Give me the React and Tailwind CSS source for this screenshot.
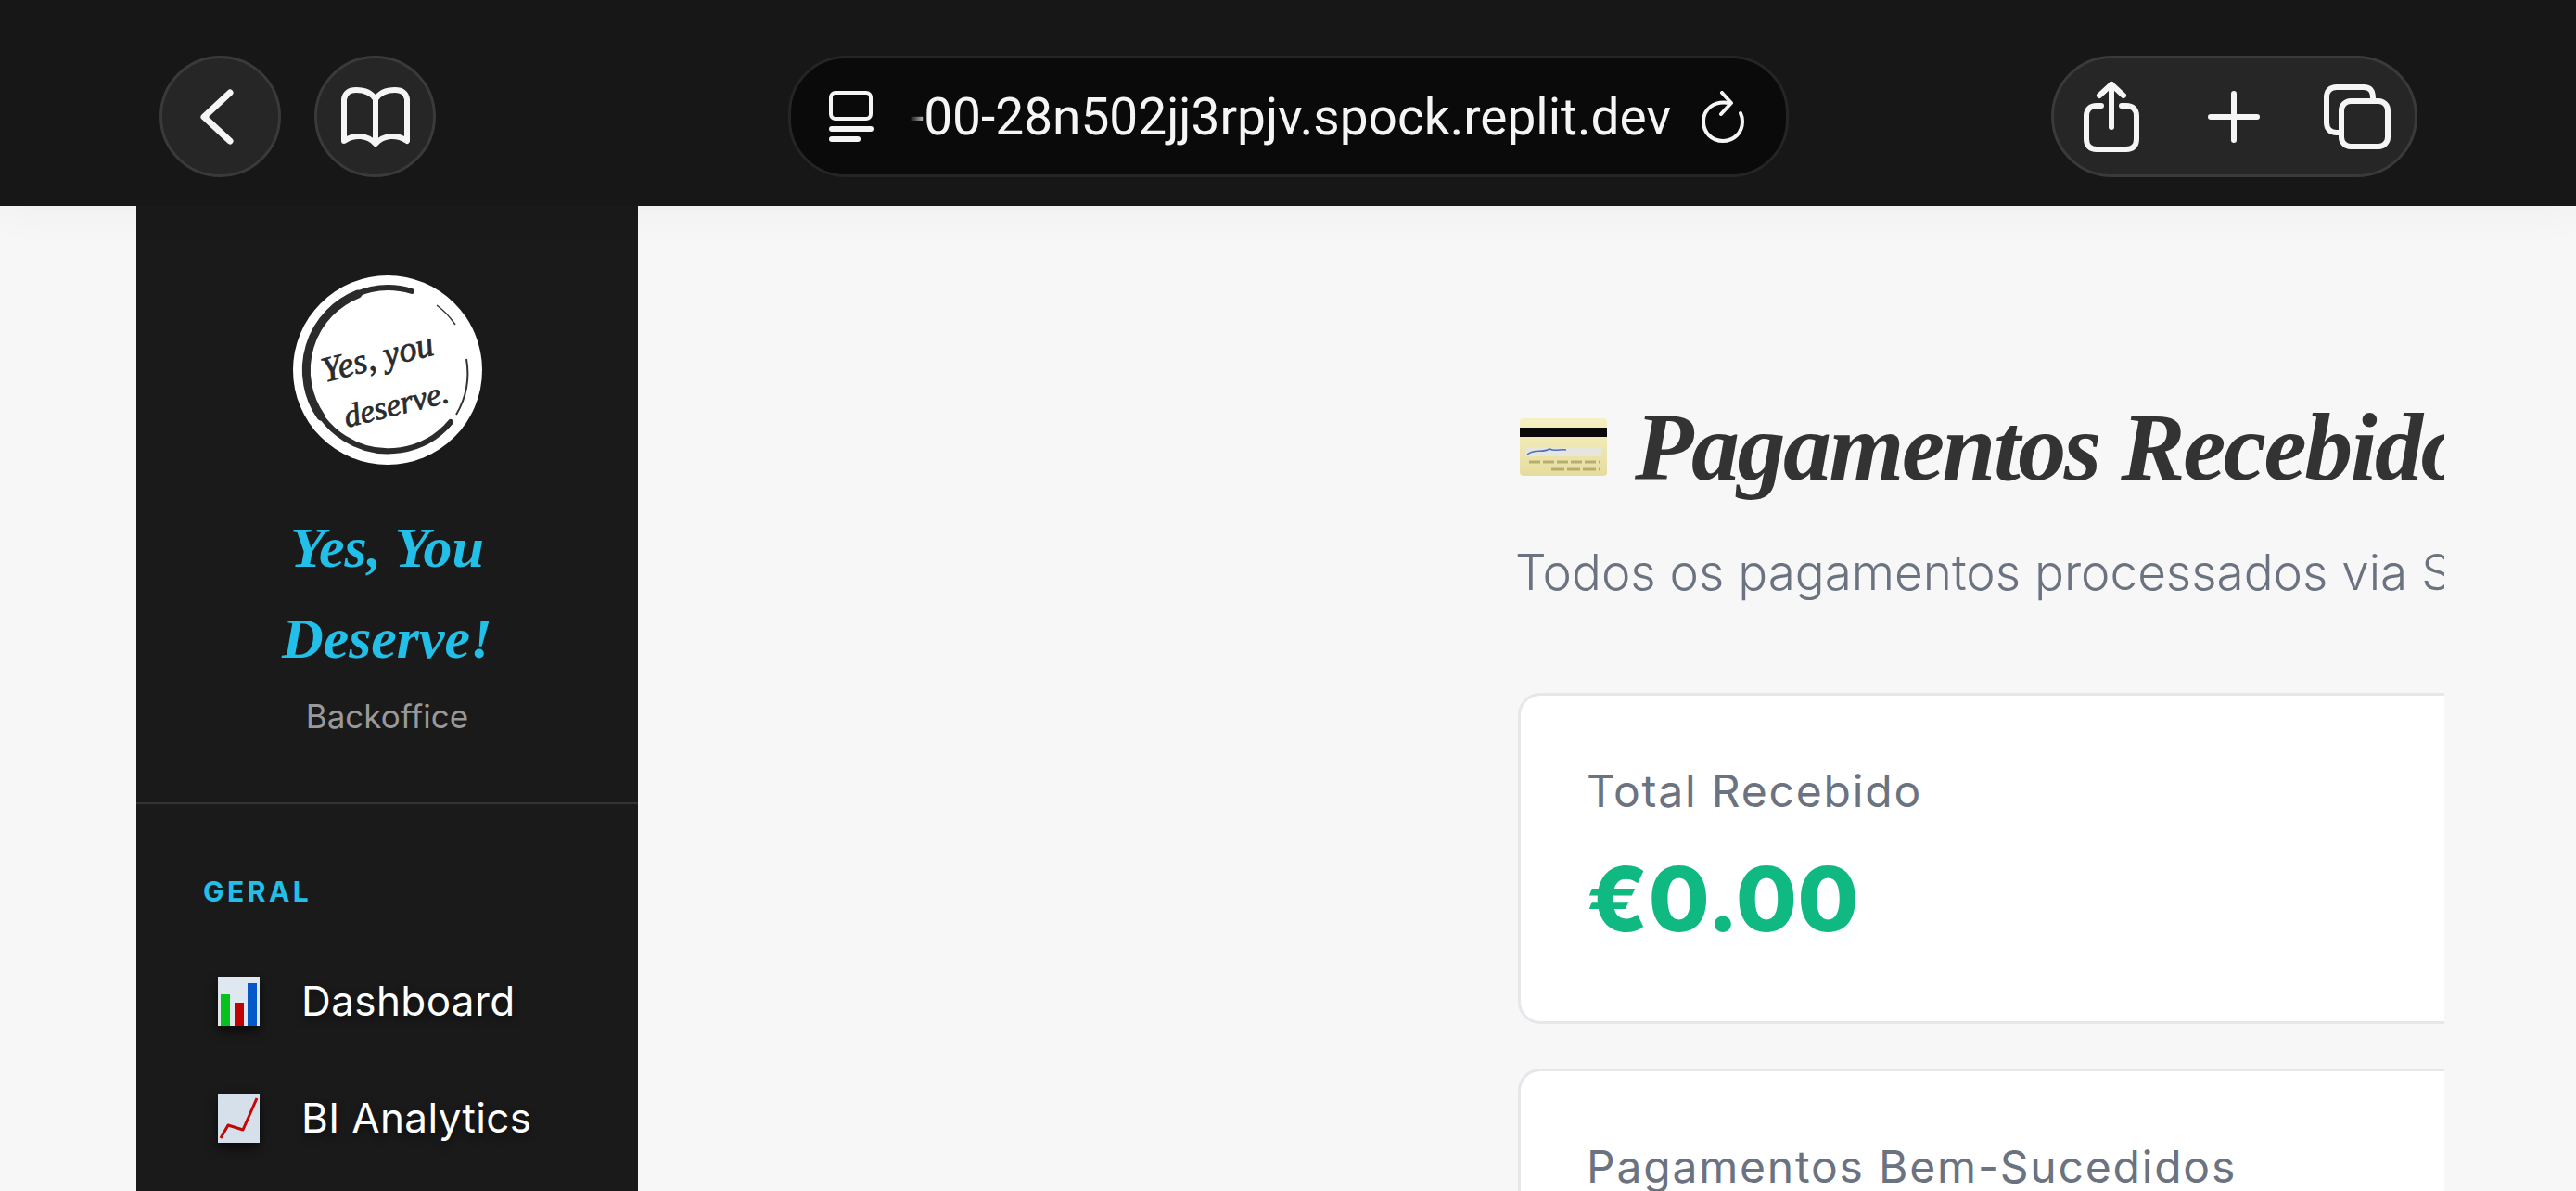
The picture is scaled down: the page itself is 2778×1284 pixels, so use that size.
const sans = "font-['Inter','Open_Sans',sans-serif]";
const script = "font-['Liberation_Serif',serif] italic font-bold";

const BackIcon = () => (
	<svg width="44" height="64" viewBox="0 0 44 64" fill="none" stroke="#f5f5f5" strokeWidth="7" strokeLinecap="round" strokeLinejoin="round" className="-ml-[8px]">
		<path d="M36 6 L8 32 L36 58" />
	</svg>
);

const BookIcon = () => (
	<svg width="78" height="66" viewBox="0 0 78 66" fill="none" stroke="#f5f5f5" strokeWidth="6" strokeLinecap="round" strokeLinejoin="round">
		<path d="M39 60 V14 C34 6 26 4 18 4 C10 4 6 8 5 14 V59 C16 52 30 52 39 62 C48 52 62 52 73 59 V14 C72 8 68 4 60 4 C52 4 44 6 39 14" />
	</svg>
);

const ListIcon = () => (
	<svg width="48" height="56" viewBox="0 0 48 56" fill="none" stroke="#f5f5f5" strokeLinecap="round">
		<rect x="2" y="2" width="43" height="28" rx="5" strokeWidth="4" />
		<path d="M3 41 H45" strokeWidth="6" />
		<path d="M3 52 H31" strokeWidth="6" />
	</svg>
);

const ReloadIcon = () => (
	<svg width="48" height="56" viewBox="0 0 48 56" fill="none" stroke="#f5f5f5" strokeWidth="4" strokeLinecap="round" strokeLinejoin="round">
		<path d="M31 13 C14 10 3 20 3 33 C3 45 12 54 24 54 C36 54 45 45 45 33 C45 29 44 26 43 24" />
		<path d="M23 2 L33 13 L22 25" />
	</svg>
);

const ShareIcon = () => (
	<svg width="62" height="78" viewBox="0 0 62 78" fill="none" stroke="#f5f5f5" strokeWidth="6" strokeLinecap="round" strokeLinejoin="round">
		<path d="M20 27 H15 C8 27 4 31 4 38 V63 C4 70 8 74 15 74 H47 C54 74 58 70 58 63 V38 C58 31 54 27 47 27 H42" />
		<path d="M31 50 V4" />
		<path d="M18 16 L31 4 L44 16" />
	</svg>
);

const PlusIcon = () => (
	<svg width="56" height="56" viewBox="0 0 56 56" fill="none" stroke="#f5f5f5" strokeWidth="6" strokeLinecap="round">
		<path d="M28 3 V53" />
		<path d="M3 28 H53" />
	</svg>
);

const TabsIcon = () => (
	<svg width="72" height="70" viewBox="0 0 72 70" fill="none" stroke="#f5f5f5" strokeWidth="6" strokeLinecap="round" strokeLinejoin="round">
		<path d="M19 52 H14 C7 52 3 48 3 41 V14 C3 7 7 3 14 3 H43 C50 3 53 7 53 15" />
		<rect x="19" y="18" width="50" height="49" rx="10" />
	</svg>
);

const Logo = () => (
	<svg width="204" height="204" viewBox="0 0 204 204" className="shrink-0">
		<circle cx="102" cy="102" r="102" fill="#ffffff" />
		<path d="M128 17 A88 88 0 1 0 170 158" fill="none" stroke="#2b2b2b" strokeWidth="6" strokeLinecap="round" />
		<path d="M70 20 A88 88 0 0 0 30 152" fill="none" stroke="#2b2b2b" strokeWidth="9" strokeLinecap="round" />
		<path d="M155 32 A88 88 0 0 1 175 53" fill="none" stroke="#333333" strokeWidth="1.5" />
		<path d="M187 90 A88 88 0 0 1 176 150" fill="none" stroke="#333333" strokeWidth="2" />
		<g fill="#2b2b2b" stroke="#2b2b2b" strokeWidth="0.8" fontFamily="'Liberation Serif', serif" fontStyle="italic" fontSize="38" textAnchor="middle">
			<text transform="translate(94 100) rotate(-14)">Yes, you</text>
			<text transform="translate(114 150) rotate(-14)" fontSize="35">deserve.</text>
		</g>
	</svg>
);

const BarsEmoji = () => (
	<svg width="45" height="53" viewBox="0 0 45 53" className="shrink-0 drop-shadow-[0_6px_6px_rgba(0,0,0,0.6)]">
		<rect width="45" height="53" fill="#dfe8f0" />
		<rect x="3" y="19" width="10" height="34" fill="#08c21c" />
		<rect x="18" y="28" width="10" height="25" fill="#bf0202" />
		<rect x="32" y="7" width="10" height="46" fill="#0458c8" />
	</svg>
);

const LineEmoji = () => (
	<svg width="45" height="53" viewBox="0 0 45 53" className="shrink-0 drop-shadow-[0_6px_6px_rgba(0,0,0,0.6)]">
		<rect width="45" height="53" fill="#d5e0ea" />
		<path d="M3 48 L11 34 L27 39 L42 5" fill="none" stroke="#c40606" strokeWidth="3" strokeLinejoin="round" />
	</svg>
);

const CardEmoji = () => (
	<svg width="94" height="62" viewBox="0 0 94 62" className="ml-[2px] shrink-0">
		<defs>
			<linearGradient id="card" x1="0" y1="0" x2="0" y2="1">
				<stop offset="0" stopColor="#f6f1c4" />
				<stop offset="1" stopColor="#e6dc9e" />
			</linearGradient>
		</defs>
		<rect width="94" height="62" rx="4" fill="url(#card)" />
		<rect y="10" width="94" height="10" fill="#0a0a0a" />
		<rect x="6" y="31" width="82" height="10" fill="#e6e6de" />
		<path d="M8 39 C16 32 24 38 32 33 C38 36 44 33 50 34" fill="none" stroke="#4a6fc0" strokeWidth="1.5" />
		<path d="M10 47 H86" stroke="#b8ad70" strokeWidth="3" strokeDasharray="12 3" />
		<path d="M34 55 H86" stroke="#b8ad70" strokeWidth="3" strokeDasharray="14 3" />
	</svg>
);

const NavItem = ({ icon, label }) => (
	<div className="flex h-[126px] items-center gap-[45px] pl-[88px]">
		{icon}
		<span className={`${sans} text-[44px] tracking-[0.4px] text-white [text-shadow:0_4px_8px_rgba(0,0,0,0.5)]`}>{label}</span>
	</div>
);

const StatCard = ({ label, value }) => (
	<div className="h-[357px] w-[1300px] shrink-0 rounded-[24px] border-[3px] border-[#e5e7eb] bg-white pt-[77px] pl-[71px]">
		<p className={`${sans} text-[48px] leading-[52px] tracking-[1.8px] text-[#6b7280]`}>{label}</p>
		{value && <p className={`${sans} mt-[35px] text-[96px] leading-[110px] font-extrabold text-[#10b981]`}>{value}</p>}
	</div>
);

const App = () => {
	return (
		<div className="h-[1284px] w-[2778px] overflow-hidden bg-[#f7f7f7]">
			{/* browser chrome */}
			<div className="relative z-10 flex h-[222px] items-center bg-[#171717] pt-[29px] pl-[172px] shadow-[0_12px_40px_rgba(0,0,0,0.03)]">
				<div className="flex gap-[36px]">
					<div className={styles.circle}>
						<BackIcon />
					</div>
					<div className={styles.circle}>
						<BookIcon />
					</div>
				</div>
				<div className="ml-[380px] flex h-[131px] w-[1079px] items-center rounded-[62px] border-[3px] border-[#252525] bg-[#0a0a0a] pl-[41px]">
					<ListIcon />
					<span className="ml-[39px] w-[822px] overflow-hidden font-['Roboto',sans-serif] text-[55px] leading-[62px] whitespace-nowrap text-[#f5f5f5] [mask-image:linear-gradient(90deg,transparent,black_20px)]">
						-00-28n502jj3rpjv.spock.replit.dev
					</span>
					<span className="ml-[31px]">
						<ReloadIcon />
					</span>
				</div>
				<div className="ml-[283px] flex h-[131px] w-[395px] items-center rounded-[66px] border-[3px] border-[#3a3a3a] bg-[#262626] pl-[31px]">
					<ShareIcon />
					<span className="ml-[73px]">
						<PlusIcon />
					</span>
					<span className="ml-[69px]">
						<TabsIcon />
					</span>
				</div>
			</div>

			<div className="flex h-[1062px] pl-[147px]">
				{/* sidebar */}
				<aside className="h-full w-[541px] shrink-0 bg-[#1a1a1a]">
					<div className="flex flex-col items-center border-b-[2px] border-[#333333] pt-[75px] pb-[67px]">
						<Logo />
						<h2 className={`${script} mt-[40px] w-[300px] text-center text-[62px] leading-[98px] text-[#22c0e8]`}>
							Yes, You Deserve!
						</h2>
						<p className={`${sans} mt-[9px] text-[35px] leading-[52px] text-[#999999]`}>Backoffice</p>
					</div>
					<p className={`${sans} mt-[76px] pl-[72px] text-[30px] leading-[36px] font-bold tracking-[3.5px] text-[#22c0e8]`}>GERAL</p>
					<div className="mt-[37px]">
						<NavItem icon={<BarsEmoji />} label="Dashboard" />
						<NavItem icon={<LineEmoji />} label="BI Analytics" />
					</div>
				</aside>

				{/* main */}
				<main className="h-full w-[1948px] shrink-0 overflow-hidden bg-[#f7f7f7] pl-[949px]">
					<div className="flex h-[340px] w-[1300px] flex-col">
						<div className="mt-[190px] flex h-[140px] items-center gap-[30px]">
							<CardEmoji />
							<h1 className={`${script} text-[104px] leading-[140px] tracking-[-2.5px] whitespace-nowrap text-[#333333]`}>Pagamentos Recebidos</h1>
						</div>
						<p className={`${sans} mt-[31px] -ml-[3px] text-[53px] leading-[68px] font-light whitespace-nowrap text-[#6b7280]`}>
							Todos os pagamentos processados via Stripe
						</p>
					</div>
					<div className="mt-[185px] flex w-[1300px] flex-col gap-[48px]">
						<StatCard label="Total Recebido" value="€0.00" />
						<StatCard label="Pagamentos Bem-Sucedidos" />
					</div>
				</main>
			</div>
		</div>
	);
};

const styles = {
	circle: "flex h-[131px] w-[131px] items-center justify-center rounded-full border-[3px] border-[#3a3a3a] bg-[#262626]",
};

export default App;
